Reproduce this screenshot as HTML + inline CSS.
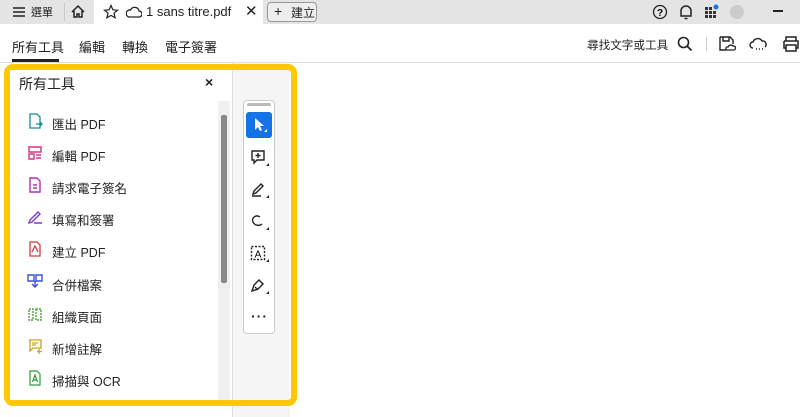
<!DOCTYPE html>
<html><head><meta charset="utf-8"><style>
*{margin:0;padding:0;box-sizing:border-box}
body{width:800px;height:417px;overflow:hidden;background:#fff;font-family:"Liberation Sans","Noto Sans CJK TC",sans-serif;color:#222;position:relative}
.abs{position:absolute}
.t{font-size:12px;white-space:nowrap}
</style></head><body>
<div class="abs" style="left:0;top:0;width:800px;height:24px;background:#e4e4e4"></div>
<div class="abs" style="left:94px;top:0;width:169px;height:24px;background:#fff"></div>
<div class="abs" style="left:64px;top:3px;width:1px;height:18px;background:#c8c8c8"></div>
<svg class="abs" style="left:12px;top:6px" width="14" height="12"><path d="M1 2h12M1 6h12M1 10h12" stroke="#222" stroke-width="1.5"/></svg>
<div class="abs t" style="left:31px;top:4px;font-size:11px">選單</div>
<svg class="abs" style="left:70px;top:4px" width="16" height="16"><path d="M2 8L8 2l6 6M4 7v6h3v-3h2v3h3V7" fill="none" stroke="#222" stroke-width="1.5"/></svg>
<svg class="abs" style="left:103px;top:4px" width="16" height="16"><path d="M8 1.5l1.9 4.3 4.6.4-3.5 3 1.1 4.6L8 11.4l-4.1 2.4L5 9.2l-3.5-3 4.6-.4z" fill="none" stroke="#222" stroke-width="1.2"/></svg>
<svg class="abs" style="left:126px;top:6px" width="16" height="12"><path d="M3 11h10a3 3 0 0 0 0-6 4.5 4.5 0 0 0-8.5-1A3.5 3.5 0 0 0 3 11z" fill="none" stroke="#222" stroke-width="1.3"/></svg>
<div class="abs t" style="left:146px;top:4px;font-size:13px">1 sans titre.pdf</div>
<div class="abs t" style="left:245px;top:2px;font-size:15px">✕</div>
<div class="abs" style="left:267px;top:2px;width:50px;height:20px;border:1px solid #999;border-radius:4px;background:#eee"></div>
<div class="abs t" style="left:274px;top:3px;font-size:14px">+</div>
<div class="abs t" style="left:291px;top:4px;font-size:12px">建立</div>
<svg class="abs" style="left:652px;top:4px" width="16" height="16"><circle cx="8" cy="8" r="6.5" fill="none" stroke="#222" stroke-width="1.3"/><text x="8" y="12" font-size="10" text-anchor="middle" font-family="Liberation Sans" font-weight="bold">?</text></svg>
<svg class="abs" style="left:678px;top:3px" width="16" height="18"><path d="M3 13V8a5 5 0 0 1 10 0v5H3zM6.5 15.5h3" fill="none" stroke="#222" stroke-width="1.5"/></svg>
<svg class="abs" style="left:704px;top:4px" width="16" height="16"><g fill="#333"><rect x="1" y="3" width="3" height="3"/><rect x="5" y="3" width="3" height="3"/><rect x="1" y="7" width="3" height="3"/><rect x="5" y="7" width="3" height="3"/><rect x="9" y="7" width="3" height="3"/><rect x="1" y="11" width="3" height="3"/><rect x="5" y="11" width="3" height="3"/><rect x="9" y="11" width="3" height="3"/></g><circle cx="12" cy="3" r="2.5" fill="#1473e6"/></svg>
<div class="abs" style="left:730px;top:5px;width:14px;height:14px;border-radius:50%;background:#ccc"></div>
<div class="abs" style="left:773px;top:10px;width:10px;height:2px;background:#222"></div>

<div class="abs t" style="left:12px;top:37px;font-size:13px">所有工具</div>
<div class="abs" style="left:12px;top:59px;width:47px;height:3px;background:#222"></div>
<div class="abs t" style="left:79px;top:37px;font-size:13px">編輯</div>
<div class="abs t" style="left:122px;top:37px;font-size:13px">轉換</div>
<div class="abs t" style="left:165px;top:37px;font-size:13px">電子簽署</div>
<div class="abs t" style="left:587px;top:37px;font-size:11.6px">尋找文字或工具</div>
<svg class="abs" style="left:677px;top:36px" width="16" height="16"><circle cx="6.5" cy="6.5" r="5" fill="none" stroke="#222" stroke-width="1.6"/><path d="M10 10l4.5 4.5" stroke="#222" stroke-width="1.8"/></svg>
<div class="abs" style="left:706px;top:37px;width:1px;height:14px;background:#ccc"></div>
<svg class="abs" style="left:718px;top:35px" width="18" height="18"><path d="M2 2h10l3 3v4M2 2v13h6M5 2v4h6V2" fill="none" stroke="#222" stroke-width="1.4"/><path d="M9 15h7a2 2 0 0 0-1-4 3 3 0 0 0-5 1 1.5 1.5 0 0 0-1 3z" fill="none" stroke="#222" stroke-width="1.3"/></svg>
<svg class="abs" style="left:749px;top:37px" width="20" height="14"><path d="M4 11a3 3 0 0 1 0-6 5 5 0 0 1 9-1 3.5 3.5 0 0 1 3 6" fill="none" stroke="#222" stroke-width="1.4"/><path d="M7 12h1M10 12h1M13 12h1" stroke="#222" stroke-width="1.5"/></svg>
<svg class="abs" style="left:782px;top:35px" width="18" height="18"><path d="M4 6V2h10v4M2 6h14v7h-2M4 13H2V6M4 10h10v6H4z" fill="none" stroke="#222" stroke-width="1.5"/></svg>
<div class="abs" style="left:0;top:62px;width:800px;height:1px;background:#ddd"></div>

<div class="abs" style="left:232px;top:63px;width:1px;height:354px;background:#ddd"></div>
<div class="abs" style="left:233px;top:63px;width:57px;height:354px;background:#f5f5f5"></div>
<div class="abs" style="left:4px;top:64px;width:293px;height:342px;border:6px solid #ffc800;border-radius:9px"></div>
<div class="abs" style="left:10px;top:70px;width:222px;height:330px;background:#fff"></div>
<div class="abs t" style="left:19px;top:74px;font-size:14px">所有工具</div>
<div class="abs t" style="left:205px;top:74px;font-size:14px;font-weight:bold">×</div>
<div class="abs" style="left:218px;top:101px;width:12px;height:299px;background:#f0f0f0"></div>
<div class="abs" style="left:221px;top:115px;width:6px;height:168px;background:#888;border-radius:2px"></div>

<svg class="abs" style="left:27px;top:113px" width="16" height="16"><path d="M3 1h7l3 3v11H3z" fill="none" stroke="#148f8f" stroke-width="1.3"/><path d="M9 11h6M13 9l2 2-2 2" fill="none" stroke="#148f8f" stroke-width="1.3"/></svg>
<div class="abs t" style="left:52px;top:114px;font-size:12.5px">匯出 PDF</div>
<svg class="abs" style="left:27px;top:145px" width="16" height="16"><path d="M2 2h12v5H2zM2 9h5v5H2zM9 10h5M9 13h5" fill="none" stroke="#d63384" stroke-width="1.4"/></svg>
<div class="abs t" style="left:52px;top:146px;font-size:12.5px">編輯 PDF</div>
<svg class="abs" style="left:27px;top:177px" width="16" height="16"><path d="M3 1h7l3 3v11H3zM6 8h4M6 11h4" fill="none" stroke="#b030b0" stroke-width="1.4"/></svg>
<div class="abs t" style="left:52px;top:178px;font-size:12.5px">請求電子簽名</div>
<svg class="abs" style="left:27px;top:209px" width="16" height="16"><path d="M2 14l3-1 8-8-2-2-8 8zM7 14h8" fill="none" stroke="#7a3ec9" stroke-width="1.4"/></svg>
<div class="abs t" style="left:52px;top:210px;font-size:12.5px">填寫和簽署</div>
<svg class="abs" style="left:27px;top:241px" width="16" height="16"><path d="M3 1h7l3 3v11H3zM5 11l3-6 3 6" fill="none" stroke="#d7373f" stroke-width="1.3"/></svg>
<div class="abs t" style="left:52px;top:242px;font-size:12.5px">建立 PDF</div>
<svg class="abs" style="left:27px;top:273px" width="16" height="16"><path d="M1 2h6v6H1zM9 2h6v6H9zM8 8v6M5 11l3 3 3-3" fill="none" stroke="#3b4fd9" stroke-width="1.4"/></svg>
<div class="abs t" style="left:52px;top:275px;font-size:12.5px">合併檔案</div>
<svg class="abs" style="left:27px;top:306px" width="16" height="16"><path d="M2 3h4v11H2zM9 3h5v11H9z" fill="none" stroke="#4ca33a" stroke-width="1.4" stroke-dasharray="2 1"/></svg>
<div class="abs t" style="left:52px;top:307px;font-size:12.5px">組織頁面</div>
<svg class="abs" style="left:27px;top:338px" width="16" height="16"><path d="M2 2h12v8H6l-3 3V2M5 5h6M5 7h4M12 11v5M10 13.5h5" fill="none" stroke="#c9a227" stroke-width="1.3"/></svg>
<div class="abs t" style="left:52px;top:339px;font-size:12.5px">新增註解</div>
<svg class="abs" style="left:27px;top:370px" width="16" height="16"><path d="M3 1h7l3 3v11H3zM5.5 12l2.5-7 2.5 7M6.5 10h3" fill="none" stroke="#2d9d3a" stroke-width="1.2"/></svg>
<div class="abs t" style="left:52px;top:371px;font-size:12.5px">掃描與 OCR</div>

<div class="abs" style="left:243px;top:100px;width:32px;height:234px;border:1px solid #ccc;border-radius:4px;background:#fff"></div>
<div class="abs" style="left:247px;top:103px;width:24px;height:3px;background:#bbb;border-radius:2px"></div>
<div class="abs" style="left:246px;top:112px;width:26px;height:26px;background:#1473e6;border-radius:3px"></div>
<svg class="abs" style="left:252px;top:117px" width="16" height="16"><path d="M3 1v12l3-3 2 4 2-1-2-4h4z" fill="#fff"/><path d="M15 15h-3l3-3z" fill="#fff"/></svg>
<svg class="abs" style="left:250px;top:149px" width="20" height="18"><path d="M2 2h12v9H7l-3 3v-3H2zM8 4v5M5.5 6.5h5" fill="none" stroke="#222" stroke-width="1.4"/><path d="M19 17h-3l3-3z" fill="#222"/></svg>
<svg class="abs" style="left:250px;top:181px" width="20" height="18"><path d="M3 13l1-3 7-7 2 2-7 7zM2 15h9" fill="none" stroke="#222" stroke-width="1.4"/><path d="M19 17h-3l3-3z" fill="#222"/></svg>
<svg class="abs" style="left:250px;top:213px" width="20" height="18"><path d="M10 4C6 1 1 5 3 9s7 4 9 2" fill="none" stroke="#222" stroke-width="1.4"/><path d="M19 17h-3l3-3z" fill="#222"/></svg>
<svg class="abs" style="left:250px;top:245px" width="20" height="18"><rect x="1.5" y="1.5" width="13" height="13" fill="none" stroke="#222" stroke-width="1.4" stroke-dasharray="2 1.5"/><text x="8" y="12.5" font-size="10" text-anchor="middle" font-family="Liberation Sans">A</text><path d="M19 17h-3l3-3z" fill="#222"/></svg>
<svg class="abs" style="left:250px;top:277px" width="20" height="18"><path d="M2 14l2-6 5-5 4 4-5 5zM5 10l3 3" fill="none" stroke="#222" stroke-width="1.4"/><path d="M19 17h-3l3-3z" fill="#222"/></svg>
<div class="abs t" style="left:251px;top:308px;font-size:14px;font-weight:bold;letter-spacing:1px">···</div>
</body></html>
